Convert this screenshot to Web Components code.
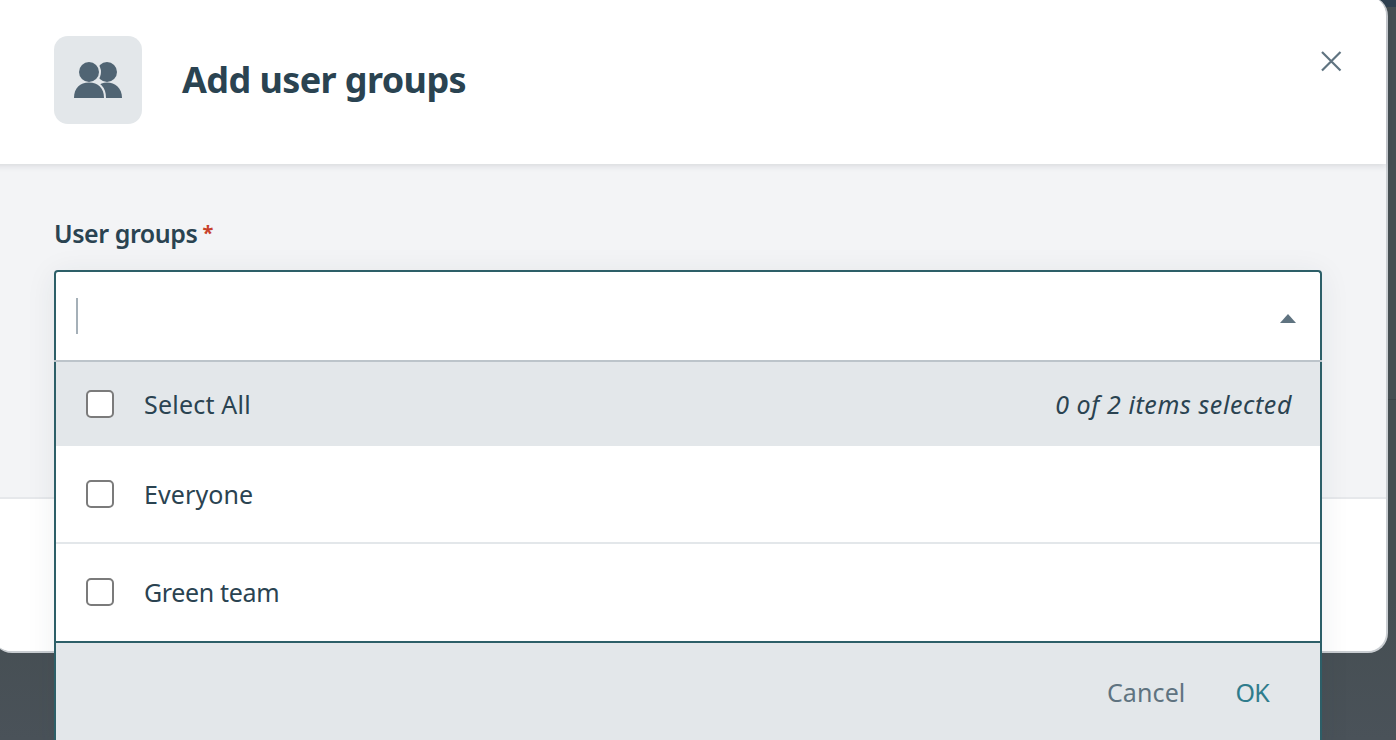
<!DOCTYPE html>
<html>
<head>
<meta charset="utf-8">
<title>Add user groups</title>
<style>
  html, body { margin: 0; height: 100%; overflow: hidden; }
  body {
    font-family: "Noto Sans", "Open Sans", sans-serif; color: #2a4351;
    background:
      linear-gradient(#2f4050 0 7px, transparent 7px 399px, #3c4448 399px 400px, transparent 400px),
      linear-gradient(#454e52 0 600px, #4a5259 740px);
  }
</style>
</head>
<body>
<template id="tpl-check-row">
  <style>
    :host { display: flex; align-items: center; box-sizing: border-box; padding: 0 30px; height: var(--row-h, 97px); gap: 30px; background: var(--row-bg, #fff); }
    .box { width: 28px; height: 28px; box-sizing: border-box; border: 2px solid #7b7b7b; border-radius: 5px; background: #fff; flex: none; margin-bottom: 1px; }
    .label { flex: 1; font-size: 25px; letter-spacing: var(--label-ls, 0); padding-bottom: var(--nudge, 2px); }
    .note { font-size: 25px; font-style: italic; letter-spacing: 0.6px; padding-bottom: var(--nudge, 2px); margin-right: -2px; }
  </style>
  <span class="box"></span>
  <span class="label"><slot></slot></span>
  <span class="note"><slot name="note"></slot></span>
</template>

<template id="tpl-picker">
  <style>
    :host { display: block; position: absolute; left: 54px; top: 270px; width: 1268px; box-sizing: border-box; border: 2px solid #2d5f68; border-bottom: 0; border-radius: 4px 4px 0 0; background: #fff; box-shadow: 0 4px 30px rgba(40,50,60,.08); }
    .input { height: 88px; display: flex; align-items: center; justify-content: space-between; border-bottom: 2px solid #bcc4ca; margin: 0 -2px; padding: 0 26px 0 22px; }
    .caret { width: 2px; height: 36px; background: #a5b0b8; }
    .arrow { width: 16px; height: 9px; margin-top: 4px; }
    .rows { border-bottom: 2px solid #2d5f68; }
    .foot { height: 110px; background: #e3e7ea; display: flex; justify-content: flex-end; gap: 50px; padding: 32px 51px 0 0; box-sizing: border-box; font-size: 25px; }
    .cancel { color: #5f7380; letter-spacing: 0.1px; }
    .ok { color: #2f7c8c; letter-spacing: -0.7px; }
  </style>
  <div class="input">
    <span class="caret"></span>
    <svg class="arrow" viewBox="0 0 16 9"><path d="M8 0 16 9H0z" fill="#5f7380"/></svg>
  </div>
  <div class="rows"><slot></slot></div>
  <div class="foot"><span class="cancel">Cancel</span><span class="ok">OK</span></div>
</template>

<template id="tpl-dialog">
  <style>
    :host { display: block; position: relative; box-sizing: border-box; width: 1396px; height: 657px; margin: -4px 0 0 -8px; border-radius: 20px; background: #fff; border: solid #c9cdd1; border-width: 0 2px 2px 0; }
    .head { height: 168px; box-sizing: border-box; padding: 40px 54px 0 62px; display: flex; gap: 40px; position: relative; z-index: 1; box-shadow: 0 2px 6px rgba(50,60,70,.14); background: #fff; border-radius: 20px 20px 0 0; }
    .badge { width: 88px; height: 88px; border-radius: 14px; background: #e3e7ea; display: flex; align-items: center; justify-content: center; flex: none; }
    h1 { margin: 0; font-size: 36px; font-weight: 700; letter-spacing: -0.6px; line-height: 88px; color: #2a4351; flex: 1; }
    .close { position: absolute; right: 43px; top: 52.500px; width: 24px; height: 24px; }
    .body { height: 333px; box-sizing: border-box; background: #f3f4f6; padding: 53px 62px 0; }
    .lbl { font-size: 25px; font-weight: 600; letter-spacing: -0.45px; line-height: 32px; color: #2a4351; }
    .req { color: #c8412a; font-size: 20px; font-weight: 700; position: relative; top: -3px; left: -1px; letter-spacing: 0; }
    .foot { height: 154px; background: #fff; border-top: 2px solid #e6e8eb; border-radius: 0 0 20px 20px; box-sizing: border-box; }
  </style>
  <div class="head">
    <div class="badge">
      <svg width="48" height="36" viewBox="0 0 48 36" fill="#506473">
        <defs>
          <mask id="behind" maskUnits="userSpaceOnUse" x="0" y="0" width="48" height="36">
            <rect width="48" height="36" fill="#fff"/>
            <circle cx="15" cy="10" r="12" fill="#000"/>
            <path d="M0 36C0 26 6 20.500 15 20.500S30 26 30 36z" fill="#000" stroke="#000" stroke-width="4"/>
          </mask>
        </defs>
        <g mask="url(#behind)">
          <circle cx="33" cy="10" r="10"/>
          <path d="M20 36C20 26 25 20.500 33 20.500S48 26 48 36z"/>
        </g>
        <circle cx="15" cy="10" r="10"/>
        <path d="M0 36C0 26 6 20.500 15 20.500S30 26 30 36z"/>
      </svg>
    </div>
    <h1><slot name="title"></slot></h1>
    <svg class="close" viewBox="0 0 24 24"><path d="M3 3 21.500 21.500M21.500 3 3 21.500" stroke="#5f7380" stroke-width="2.200" fill="none"/></svg>
  </div>
  <div class="body">
    <div class="lbl"><slot name="label"></slot> <span class="req">*</span></div>
  </div>
  <div class="foot"></div>
</template>

<script>
function mount(el, id) {
  el.attachShadow({ mode: 'open' }).appendChild(document.getElementById(id).content.cloneNode(true));
}
class CheckRow extends HTMLElement { constructor() { super(); mount(this, 'tpl-check-row'); } }
class UserPicker extends HTMLElement { constructor() { super(); mount(this, 'tpl-picker'); } }
class AddDialog extends HTMLElement { constructor() { super(); mount(this, 'tpl-dialog'); } }
customElements.define('check-row', CheckRow);
customElements.define('user-picker', UserPicker);
customElements.define('add-dialog', AddDialog);
</script>

<add-dialog>
  <span slot="title">Add user groups</span>
  <span slot="label">User groups</span>
</add-dialog>
<user-picker>
  <check-row style="--row-h:84px;--row-bg:#e3e7ea;--label-ls:0.2px;--nudge:0px">Select All<span slot="note">0 of 2 items selected</span></check-row>
  <check-row style="--row-h:98px;--label-ls:0.1px;--nudge:0px;border-bottom:2px solid #e3e7ea">Everyone</check-row>
  <check-row style="--row-h:97px;--label-ls:-0.35px">Green team</check-row>
</user-picker>
</body>
</html>
